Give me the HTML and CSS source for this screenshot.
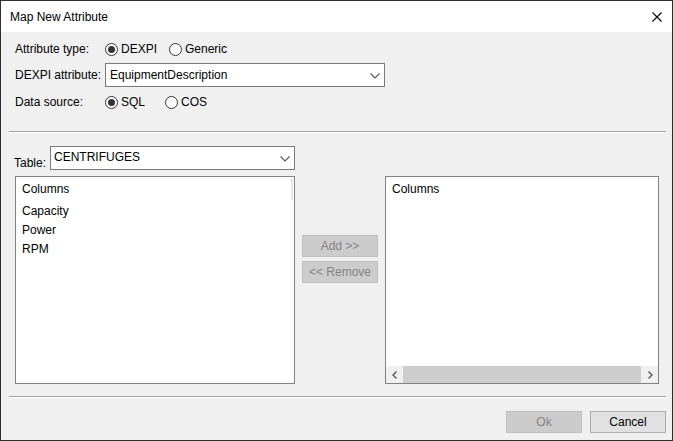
FILE: index.html
```html
<!DOCTYPE html>
<html>
<head>
<meta charset="utf-8">
<link rel="stylesheet" href="styles.css">
</head>
<body>
<div class="window">
  <div class="titlebar">
    <span class="title">Map New Attribute</span>
    <svg class="close" width="12" height="12" viewBox="0 0 12 12"><path d="M1.5 1.5 L10.5 10.5 M10.5 1.5 L1.5 10.5" stroke="#000" stroke-width="1.1" fill="none"/></svg>
  </div>
  <div class="content">
    <div class="row row1">
      <span class="label">Attribute type:</span>
      <span class="radio on w-dexpi"><span class="circle"></span><span class="rtext">DEXPI</span></span>
      <span class="radio"><span class="circle"></span><span class="rtext">Generic</span></span>
    </div>
    <div class="row row2">
      <span class="label">DEXPI attribute:</span>
      <div class="combo combo-attr">
        <span class="ctext">EquipmentDescription</span>
        <svg class="chev" width="10" height="6" viewBox="0 0 10 6"><path d="M0.5 0.5 L5 5 L9.5 0.5" stroke="#555" stroke-width="1.1" fill="none"/></svg>
      </div>
    </div>
    <div class="row row3">
      <span class="label">Data source:</span>
      <span class="radio on w-sql"><span class="circle"></span><span class="rtext">SQL</span></span>
      <span class="radio"><span class="circle"></span><span class="rtext">COS</span></span>
    </div>
    <div class="sep sep1"></div>
    <div class="table-row">
      <span class="tlabel">Table:</span>
      <div class="combo combo-table">
        <span class="ctext">CENTRIFUGES</span>
        <svg class="chev" width="10" height="6" viewBox="0 0 10 6"><path d="M0.5 0.5 L5 5 L9.5 0.5" stroke="#555" stroke-width="1.1" fill="none"/></svg>
      </div>
    </div>
    <div class="lists">
      <div class="listbox left">
        <div class="lheader"><span>Columns</span><span class="hdiv"></span></div>
        <div class="item first">Capacity</div>
        <div class="item">Power</div>
        <div class="item">RPM</div>
      </div>
      <div class="mid">
        <div class="btn disabled">Add &gt;&gt;</div>
        <div class="btn disabled">&lt;&lt; Remove</div>
      </div>
      <div class="listbox right">
        <div class="lheader"><span>Columns</span></div>
        <div class="spacer"></div>
        <div class="hscroll">
          <span class="arrow"><svg width="6" height="8" viewBox="0 0 6 8"><path d="M4.5 0.5 L1 4 L4.5 7.5" stroke="#606060" stroke-width="1.5" fill="none"/></svg></span>
          <span class="thumb"></span>
          <span class="arrow"><svg width="6" height="8" viewBox="0 0 6 8"><path d="M1.5 0.5 L5 4 L1.5 7.5" stroke="#606060" stroke-width="1.5" fill="none"/></svg></span>
        </div>
      </div>
    </div>
    <div class="sep sep2"></div>
    <div class="footer">
      <div class="btn disabled fbtn">Ok</div>
      <div class="btn normal fbtn">Cancel</div>
    </div>
  </div>
</div>
</body>
</html>
```

FILE: styles.css
```css
html, body {
  margin: 0;
  padding: 0;
  background: #f0f0f0;
}
body {
  font-family: "Liberation Sans", Arial, sans-serif;
  font-size: 12px;
  color: #000;
}
.window {
  box-sizing: border-box;
  width: 673px;
  height: 441px;
  border: 1px solid #2e2e2e;
  background: #f0f0f0;
  display: flex;
  flex-direction: column;
  overflow: hidden;
}
.titlebar {
  height: 31px;
  background: #fff;
  display: flex;
  align-items: center;
  padding-left: 9px;
  padding-right: 9px;
  flex: none;
}
.title {
  flex: 1;
  line-height: 14px;
}
.close {
  display: block;
}
.content {
  flex: 1;
  display: flex;
  flex-direction: column;
}
.row {
  display: flex;
  align-items: center;
  padding-left: 14px;
}
.label {
  width: 90px;
  flex: none;
}
.row1 {
  height: 20px;
  margin-top: 7px;
}
.row2 {
  height: 24px;
  margin-top: 4px;
}
.row3 {
  height: 20px;
  margin-top: 5px;
}
.radio {
  display: flex;
  align-items: center;
}
.w-dexpi { width: 64px; }
.w-sql { width: 60px; }
.circle {
  box-sizing: border-box;
  width: 13px;
  height: 13px;
  border: 1px solid #333;
  border-radius: 50%;
  background: #fff;
  display: flex;
  align-items: center;
  justify-content: center;
  flex: none;
}
.radio.on .circle::after {
  content: "";
  width: 7px;
  height: 7px;
  border-radius: 50%;
  background: #333;
}
.rtext {
  margin-left: 3px;
}
.combo {
  box-sizing: border-box;
  height: 24px;
  border: 1px solid #7a7a7a;
  background: #fff;
  display: flex;
  align-items: center;
  padding-left: 4px;
  padding-right: 4px;
}
.ctext { flex: 1; }
.chev { display: block; margin-top: 1px; }
.combo-attr { width: 280px; }
.sep {
  border-top: 1px solid #a0a0a0;
  border-bottom: 1px solid #fff;
  height: 0;
  margin-left: 8px;
  margin-right: 6px;
}
.sep1 { margin-top: 19px; }
.table-row {
  display: flex;
  align-items: flex-end;
  margin-top: 13px;
  padding-left: 13px;
}
.tlabel {
  width: 36px;
  line-height: 14px;
}
.combo-table {
  width: 245px;
  padding-left: 3px;
}
.combo-table .ctext { margin-top: -2px; }
.lists {
  display: flex;
  margin-top: 6px;
  padding-left: 14px;
  height: 208px;
}
.listbox {
  box-sizing: border-box;
  height: 208px;
  border: 1px solid #828282;
  background: #fff;
  display: flex;
  flex-direction: column;
}
.left { width: 280px; }
.right { width: 274px; }
.lheader {
  height: 24px;
  display: flex;
  align-items: center;
  padding-left: 6px;
  position: relative;
}
.hdiv {
  position: absolute;
  right: 1px;
  top: 1px;
  width: 2px;
  height: 22px;
  background: #e5e5e5;
}
.item {
  height: 19px;
  line-height: 19px;
  padding-left: 6px;
}
.item.first { margin-top: 1px; }
.mid {
  width: 90px;
  display: flex;
  flex-direction: column;
  align-items: center;
  padding-top: 59px;
  gap: 4px;
  box-sizing: border-box;
}
.btn {
  box-sizing: border-box;
  width: 76px;
  height: 22px;
  display: flex;
  align-items: center;
  justify-content: center;
}
.btn.disabled {
  background: #cccccc;
  border: 1px solid #bfbfbf;
  color: #838383;
}
.btn.normal {
  background: #e1e1e1;
  border: 1px solid #adadad;
  color: #000;
}
.spacer { flex: 1; }
.hscroll {
  height: 17px;
  display: flex;
  align-items: stretch;
  background: #f0f0f0;
}
.arrow {
  width: 17px;
  display: flex;
  align-items: center;
  justify-content: center;
}
.thumb {
  flex: 1;
  background: #cdcdcd;
}
.sep2 { margin-top: 12px; }
.footer {
  display: flex;
  justify-content: flex-end;
  gap: 8px;
  margin-top: 13px;
  padding-right: 6px;
}
```
